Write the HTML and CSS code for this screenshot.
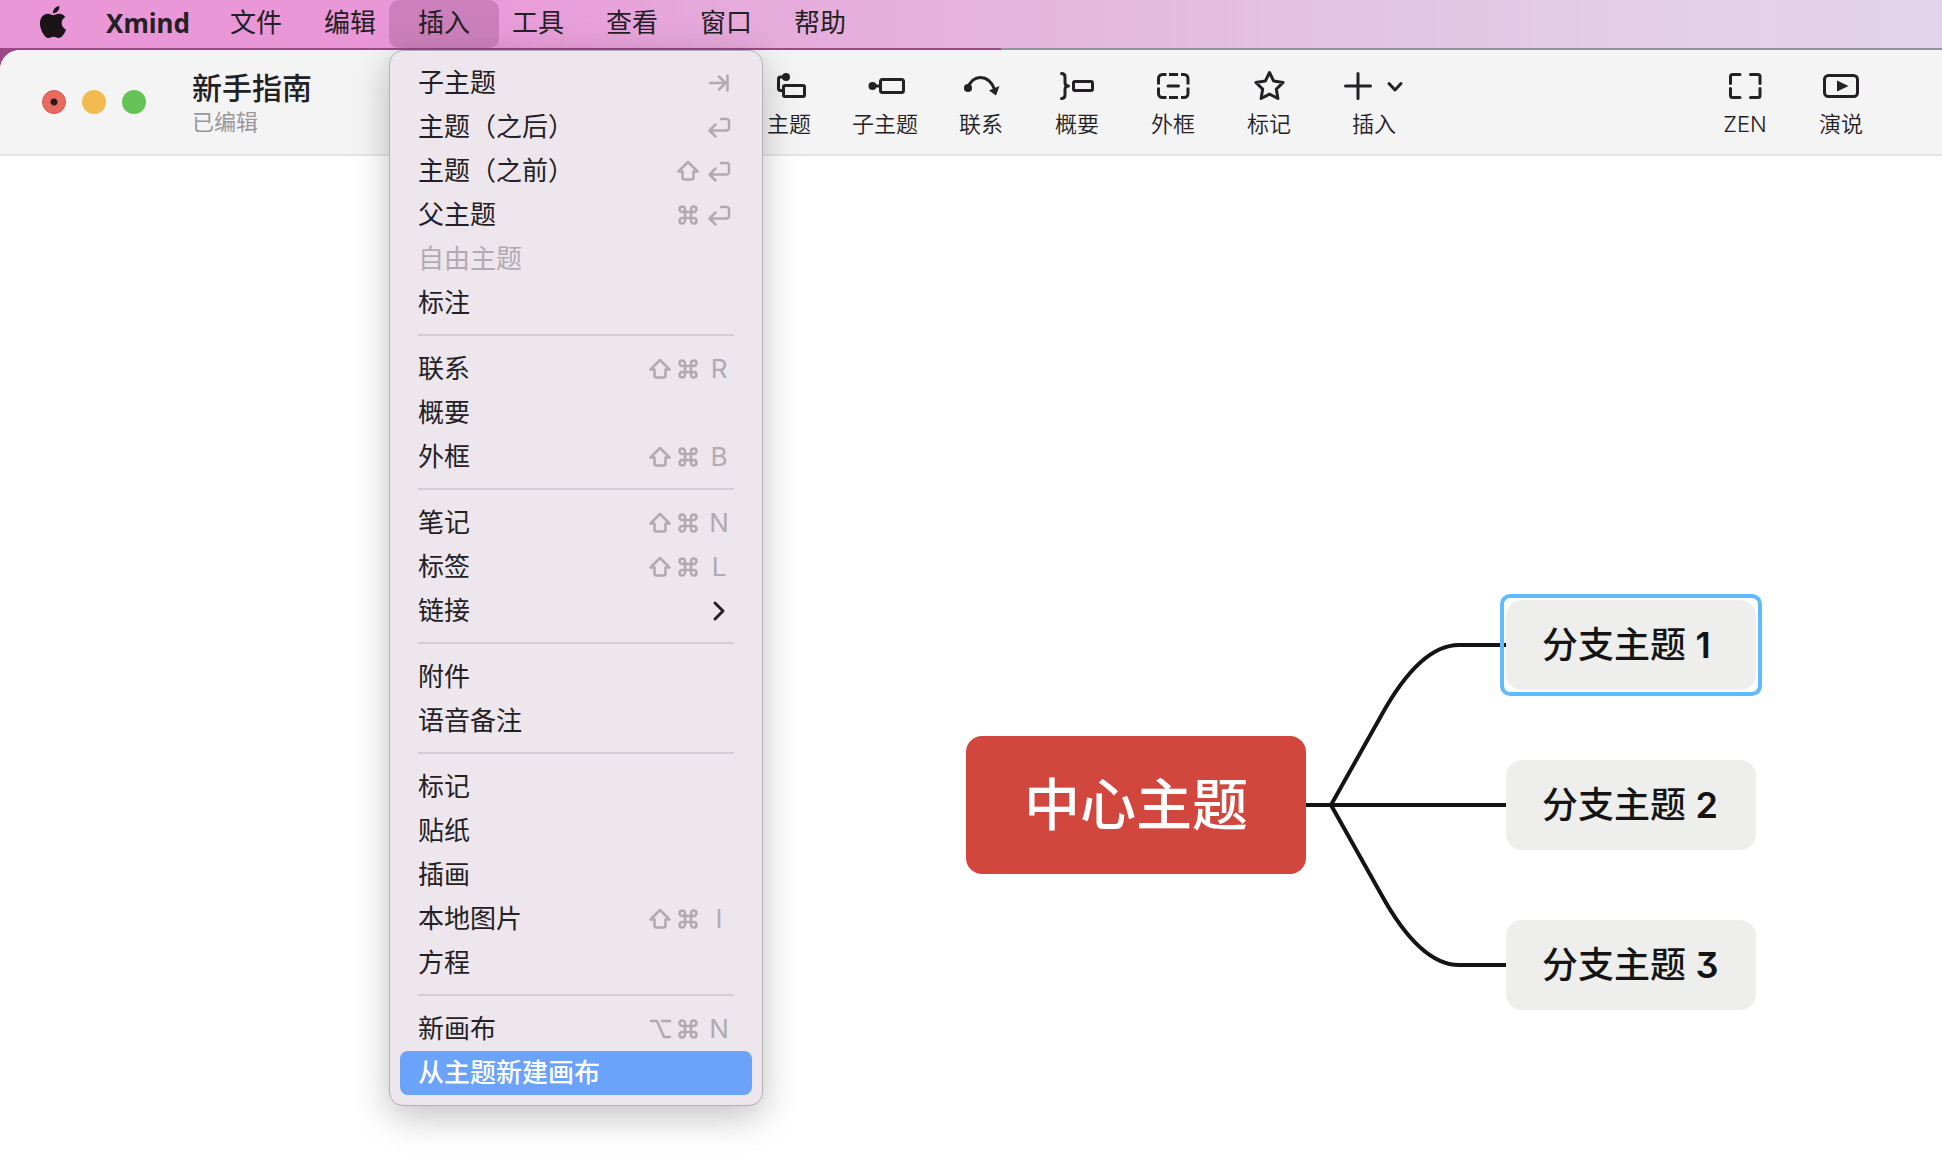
FILE: index.html
```html
<!DOCTYPE html>
<html lang="zh-CN">
<head>
<meta charset="utf-8">
<meta name="viewport" content="width=device-width, initial-scale=1">
<title>Xmind</title>
<link rel="stylesheet" href="styles.css">
</head>
<body>
<svg class="symbols" aria-hidden="true">
  <symbol id="key-tab" viewBox="0 0 24 24"><path d="M3 12h16M12 5.500l6.500 6.500-6.500 6.500M20.500 4.500v15"/></symbol>
  <symbol id="key-return" viewBox="0 0 24 24"><path d="M14 4h5.500a2.500 2.500 0 0 1 2.500 2.500v6.500a2.500 2.500 0 0 1-2.500 2.500H3M8.500 9.500l-6 6 6 6"/></symbol>
  <symbol id="key-shift" viewBox="0 0 24 24"><path d="M12 3l9.500 9.500h-4v6a2 2 0 0 1-2 2h-7a2 2 0 0 1-2-2v-6h-4z"/></symbol>
  <symbol id="key-command" viewBox="0 0 24 24"><path d="M9 9V6.250A2.750 2.750 0 1 0 6.250 9H17.750A2.750 2.750 0 1 0 15 6.250V17.750A2.750 2.750 0 1 0 17.750 15H6.250A2.750 2.750 0 1 0 9 17.750z"/></symbol>
  <symbol id="key-option" viewBox="0 0 24 24"><path d="M3 4h6l7 16h6M14 4h8"/></symbol>
</svg>

<header class="menubar">
  <svg class="apple" viewBox="0 0 24 24" role="img" aria-label="Apple"><path d="M12.152 6.896c-.948 0-2.415-1.078-3.960-1.040-2.040.027-3.910 1.183-4.961 3.014-2.117 3.675-.546 9.103 1.519 12.090 1.013 1.454 2.208 3.090 3.792 3.039 1.520-.065 2.090-.987 3.935-.987 1.831 0 2.350.987 3.960.948 1.637-.026 2.676-1.480 3.676-2.948 1.156-1.688 1.636-3.325 1.662-3.415-.039-.013-3.182-1.221-3.220-4.857-.026-3.040 2.480-4.494 2.597-4.559-1.429-2.090-3.623-2.324-4.390-2.376-2-.156-3.675 1.090-4.610 1.090zM15.530 3.830c.843-1.012 1.400-2.427 1.245-3.830-1.207.052-2.662.805-3.532 1.818-.780.896-1.454 2.338-1.273 3.714 1.338.104 2.715-.688 3.560-1.702z"/></svg>
  <button class="menubar-item app-name">Xmind</button>
  <nav class="menus">
    <button class="menubar-item">文件</button>
    <button class="menubar-item">编辑</button>
    <div class="menu-anchor">
      <button class="menubar-item open" aria-expanded="true">插入</button>
      <div class="menu">
        <button class="menu-item">子主题<span class="keys"><span class="last"><svg><use href="#key-tab"/></svg></span></span></button>
        <button class="menu-item">主题（之后）<span class="keys"><span class="last"><svg><use href="#key-return"/></svg></span></span></button>
        <button class="menu-item">主题（之前）<span class="keys"><svg><use href="#key-shift"/></svg><span class="last"><svg><use href="#key-return"/></svg></span></span></button>
        <button class="menu-item">父主题<span class="keys"><svg><use href="#key-command"/></svg><span class="last"><svg><use href="#key-return"/></svg></span></span></button>
        <button class="menu-item" disabled>自由主题</button>
        <button class="menu-item">标注</button>
        <hr>
        <button class="menu-item">联系<span class="keys"><svg><use href="#key-shift"/></svg><svg><use href="#key-command"/></svg><span class="last">R</span></span></button>
        <button class="menu-item">概要</button>
        <button class="menu-item">外框<span class="keys"><svg><use href="#key-shift"/></svg><svg><use href="#key-command"/></svg><span class="last">B</span></span></button>
        <hr>
        <button class="menu-item">笔记<span class="keys"><svg><use href="#key-shift"/></svg><svg><use href="#key-command"/></svg><span class="last">N</span></span></button>
        <button class="menu-item">标签<span class="keys"><svg><use href="#key-shift"/></svg><svg><use href="#key-command"/></svg><span class="last">L</span></span></button>
        <button class="menu-item" aria-haspopup="true">链接<span class="keys submenu"><span class="last"><svg viewBox="0 0 24 24"><path d="M8 4l8 8-8 8"/></svg></span></span></button>
        <hr>
        <button class="menu-item">附件</button>
        <button class="menu-item">语音备注</button>
        <hr>
        <button class="menu-item">标记</button>
        <button class="menu-item">贴纸</button>
        <button class="menu-item">插画</button>
        <button class="menu-item">本地图片<span class="keys"><svg><use href="#key-shift"/></svg><svg><use href="#key-command"/></svg><span class="last">I</span></span></button>
        <button class="menu-item">方程</button>
        <hr>
        <button class="menu-item">新画布<span class="keys"><svg><use href="#key-option"/></svg><svg><use href="#key-command"/></svg><span class="last">N</span></span></button>
        <button class="menu-item highlighted">从主题新建画布</button>
      </div>
    </div>
    <button class="menubar-item">工具</button>
    <button class="menubar-item">查看</button>
    <button class="menubar-item">窗口</button>
    <button class="menubar-item">帮助</button>
  </nav>
</header>

<div class="window">
  <div class="toolbar">
    <div class="lead">
      <div class="lights">
        <button class="light close" aria-label="关闭"></button>
        <button class="light minimize" aria-label="最小化"></button>
        <button class="light zoom" aria-label="缩放"></button>
      </div>
      <div class="document">
        <h1>新手指南</h1>
        <p>已编辑</p>
      </div>
    </div>
    <div class="tools">
      <button class="tool"><svg viewBox="0 0 40 32"><circle class="solid" cx="17" cy="7" r="4"/><path d="M16 7h-4.500a2 2 0 0 0-2 2v9.500a2 2 0 0 0 2 2H14"/><rect x="14.500" y="15.500" width="21" height="11" rx="1.500"/></svg>主题</button>
      <button class="tool"><svg viewBox="0 0 40 32"><circle class="solid" cx="7.500" cy="16" r="4"/><path d="M8 16h7"/><rect x="15.500" y="9.500" width="23" height="13" rx="2"/></svg>子主题</button>
      <button class="tool"><svg viewBox="0 0 40 32"><circle class="solid" cx="7" cy="18" r="4"/><path d="M7 18C11 4.500 27 3 33.500 19"/><path class="solid" d="M28 20.500l10.500-4.500-3.500 9.500z"/></svg>联系</button>
      <button class="tool"><svg viewBox="0 0 40 32"><path d="M4.500 3.500Q8 3.500 8 7v5.500Q8 16 11.500 16 8 16 8 19.500V25q0 3.500-3.500 3.500"/><rect x="16.500" y="11.500" width="19" height="9" rx="1.500"/></svg>概要</button>
      <button class="tool"><svg viewBox="0 0 40 32"><path class="butt" d="M5.500 14.500V8.500a4 4 0 0 1 4-4h4M16 4.500h9M28 4.500h3a4 4 0 0 1 4 4v6M35 17.500v6a4 4 0 0 1-4 4h-3M25 27.500h-9M13.500 27.500h-4a4 4 0 0 1-4-4v-6"/><path d="M15 16h10.500"/></svg>外框</button>
      <button class="tool"><svg viewBox="0 0 40 32"><path d="M20.500 2.500l4.200 8.600 9.400 1.400-6.800 6.600 1.600 9.400-8.400-4.400-8.400 4.400 1.600-9.400-6.800-6.600 9.400-1.400z"/></svg>标记</button>
      <button class="tool insert"><svg viewBox="0 0 64 32"><path d="M3.500 16h25M16 3.500v25M47 13.500l6 6.500 6-6.500"/></svg>插入</button>
    </div>
    <div class="tools modes">
      <button class="tool"><svg viewBox="0 0 40 32"><path d="M5.500 13.500V6.500a2 2 0 0 1 2-2h7.500M25.500 4.500H33a2 2 0 0 1 2 2v7M35 18.500v7a2 2 0 0 1-2 2h-7.500M15 27.500H7.500a2 2 0 0 1-2-2v-7"/></svg>ZEN</button>
      <button class="tool"><svg viewBox="0 0 40 32"><rect x="3.500" y="5.500" width="33" height="21" rx="4"/><path class="fill" d="M16 10.500l11.500 5.500L16 21.500z"/></svg>演说</button>
    </div>
  </div>

  <main class="canvas">
    <div class="map">
      <svg class="links" viewBox="0 0 550 422" aria-hidden="true">
        <path d="M340 211h200M365 211L415 122Q454 51 493 51h47M365 211L415 300Q454 371 493 371h47"/>
      </svg>
      <div class="node central">中心主题</div>
      <div class="node branch first selected">分支主题 <b>1</b></div>
      <div class="node branch second">分支主题 <b>2</b></div>
      <div class="node branch third">分支主题 <b>3</b></div>
    </div>
  </main>
</div>
</body>
</html>
```
FILE: styles.css
```css
* {
  box-sizing: border-box;
}

body {
  margin: 0;
  min-height: 100vh;
  display: flex;
  flex-direction: column;
  background: linear-gradient(to right, #9c4887 0 1001px, #96919b 1001px);
  color: #232124;
  font-family: Inter, "Noto Sans CJK SC", sans-serif;
  overflow: hidden;
}

button {
  margin: 0;
  padding: 0;
  border: 0;
  background: none;
  color: inherit;
  font: inherit;
}

svg {
  display: block;
  fill: none;
  stroke: currentColor;
  stroke-linecap: round;
  stroke-linejoin: round;
}

.symbols {
  position: absolute;
  width: 0;
  height: 0;
}

/* System menu bar */

.menubar {
  display: flex;
  align-items: center;
  height: 48px;
  padding-left: 37px;
  background: linear-gradient(to right, #ea97d8 0%, #ea97d8 22%, #e6aadb 38%, #e4bae0 58%, #e3c8e6 76%, #e4d0ea 88%, #e2d2ec 100%);
  font-size: 26px;
  line-height: 46px;
}

.apple {
  width: 32px;
  height: 32px;
  margin-bottom: 4px;
  fill: #1a1418;
  stroke: none;
}

.menus {
  display: flex;
}

.menubar-item {
  height: 48px;
  padding: 0 29px 2px;
  margin-right: -16px;
  border-radius: 10px;
}

.app-name {
  width: 148px;
  padding: 0 0 2px 10px;
  font-family: "Noto Sans", sans-serif;
  font-weight: 700;
}

.open {
  background: #cc80bb;
}

.menu-anchor {
  position: relative;
}

.menu {
  position: absolute;
  z-index: 2;
  top: 50px;
  left: 0;
  width: 374px;
  padding: 10px;
  border: 1px solid #b5b0b8;
  border-radius: 14px;
  background: #eee6ed;
  box-shadow: 0 10px 36px rgba(0, 0, 0, 0.25);
}

.menu-item {
  display: flex;
  align-items: center;
  justify-content: space-between;
  width: 100%;
  height: 44px;
  padding: 0 18px;
  border-radius: 8px;
  line-height: 44px;
  white-space: nowrap;
}

.menu-item:disabled {
  color: #b0abb0;
}

.menu .highlighted {
  background: #6ba2fa;
  color: #fff;
  font-weight: 500;
}

.menu hr {
  height: 2px;
  margin: 9px 18px 11px;
  border: 0;
  background: #d3ccd4;
}

.keys {
  display: flex;
  align-items: center;
  gap: 4px;
  color: #b0abb0;
}

.keys svg {
  width: 24px;
  height: 24px;
  stroke-width: 2.5;
}

.last {
  display: flex;
  justify-content: center;
  width: 30px;
}

.submenu {
  color: #232124;
}

.submenu svg {
  stroke-width: 3;
}

/* Application window */

.window {
  flex: 1;
  display: flex;
  flex-direction: column;
  margin-top: 2px;
  border-radius: 20px 0 0 0;
  background: #fff;
  overflow: hidden;
}

.toolbar {
  display: flex;
  height: 106px;
  padding-right: 53px;
  border-bottom: 2px solid #e5e5e5;
  background: #f4f4f4;
}

.lead {
  display: flex;
  align-items: center;
  gap: 46px;
  width: 741px;
  padding-left: 42px;
}

.lights {
  display: flex;
  gap: 16px;
}

.light {
  width: 24px;
  height: 24px;
  border-radius: 50%;
}

.close {
  border: 1px solid #d95248;
  background: radial-gradient(circle, #2b1a1a 0 3px, #e96b60 4px);
}

.minimize {
  background: #f1bb50;
}

.zoom {
  background: #65c456;
}

.document {
  padding-top: 4px;
}

.document h1 {
  margin: 0;
  font-size: 30px;
  line-height: 36px;
  font-weight: 500;
}

.document p {
  margin: 0;
  color: #99979b;
  font-size: 22px;
  line-height: 32px;
}

.tools {
  display: flex;
}

.modes {
  margin-left: auto;
}

.tool {
  display: flex;
  flex-direction: column;
  align-items: center;
  gap: 6px;
  width: 96px;
  padding-top: 20px;
  font-size: 22px;
  line-height: 32px;
  font-weight: 350;
}

.tool svg {
  width: 40px;
  height: 32px;
  stroke-width: 3;
}

.insert {
  width: 114px;
}

.insert svg {
  width: 64px;
}

.solid {
  fill: currentColor;
  stroke: none;
}

.fill {
  fill: currentColor;
  stroke: none;
}

.butt {
  stroke-linecap: butt;
}

/* Mind map */

.canvas {
  position: relative;
  flex: 1;
}

.map {
  position: absolute;
  top: 438px;
  left: calc(50% - 5px);
  width: 796px;
  height: 422px;
}

.links {
  width: 550px;
  height: 422px;
  color: #141414;
  stroke-width: 4;
  stroke-linecap: butt;
}

.node {
  position: absolute;
  border-radius: 16px;
  white-space: nowrap;
}

.central {
  top: 142px;
  left: 0;
  width: 340px;
  height: 138px;
  background: #d1473e;
  color: #fff;
  font-size: 56px;
  line-height: 138px;
  font-weight: 500;
  text-align: center;
}

.branch {
  left: 540px;
  width: 250px;
  height: 90px;
  padding-left: 36px;
  background: #eeeeec;
  color: #141414;
  font-size: 36px;
  line-height: 90px;
  font-weight: 500;
}

.branch b {
  font-weight: 600;
  font-feature-settings: "cv09";
}

.first {
  top: 6px;
}

.second {
  top: 166px;
}

.third {
  top: 326px;
}

.selected::after {
  content: "";
  position: absolute;
  inset: -6px;
  border: 4px solid #5fbbfd;
  border-radius: 10px;
}
```
